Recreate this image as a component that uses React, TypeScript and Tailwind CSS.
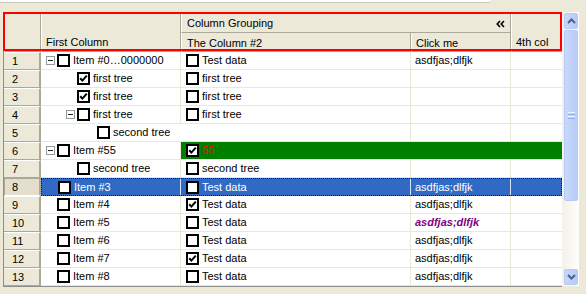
import React from 'react';

type Row = {
  n: number;
  level: number;
  expander?: boolean;
  c1: boolean;
  t1: string;
  kind?: 'span' | 'green' | 'selected';
  c2?: boolean;
  t2?: string;
  t3?: string;
  fancy3?: boolean;
};

const ROWS: Row[] = [
  { n: 1, level: 0, expander: true, c1: false, t1: 'Item #0…0000000', c2: false, t2: 'Test data', t3: 'asdfjas;dlfjk' },
  { n: 2, level: 1, c1: true, t1: 'first tree', c2: false, t2: 'first tree' },
  { n: 3, level: 1, c1: true, t1: 'first tree', c2: false, t2: 'first tree' },
  { n: 4, level: 1, expander: true, c1: false, t1: 'first tree', c2: false, t2: 'first tree' },
  { n: 5, level: 2, c1: false, t1: 'second tree', kind: 'span' },
  { n: 6, level: 0, expander: true, c1: false, t1: 'Item #55', kind: 'green', c2: true, t2: '55' },
  { n: 7, level: 1, c1: false, t1: 'second tree', c2: false, t2: 'second tree' },
  { n: 8, level: 0, c1: false, t1: 'Item #3', kind: 'selected', c2: false, t2: 'Test data', t3: 'asdfjas;dlfjk' },
  { n: 9, level: 0, c1: false, t1: 'Item #4', c2: true, t2: 'Test data', t3: 'asdfjas;dlfjk' },
  { n: 10, level: 0, c1: false, t1: 'Item #5', c2: false, t2: 'Test data', t3: 'asdfjas;dlfjk', fancy3: true },
  { n: 11, level: 0, c1: false, t1: 'Item #6', c2: false, t2: 'Test data', t3: 'asdfjas;dlfjk' },
  { n: 12, level: 0, c1: false, t1: 'Item #7', c2: true, t2: 'Test data', t3: 'asdfjas;dlfjk' },
  { n: 13, level: 0, c1: false, t1: 'Item #8', c2: false, t2: 'Test data', t3: 'asdfjas;dlfjk' },
];

// checkbox sits 16px into the cell, each tree level adds 20px
const INDENT = ['pl-[16px]', 'pl-[36px]', 'pl-[56px]'];

function Check({ checked }: { checked?: boolean }) {
  return (
    <span className="flex size-[13px] shrink-0 items-center justify-center border-2 border-black bg-white">
      {checked && (
        <svg width="9" height="9" viewBox="0 0 9 9">
          <path d="M1.2 4.2 L3.4 6.6 L7.8 1.6" fill="none" stroke="#000" strokeWidth="2" />
        </svg>
      )}
    </span>
  );
}

function Expander() {
  return (
    <span className="flex size-[9px] shrink-0 items-center justify-center border border-[#919b9c] bg-white">
      <span className="h-px w-[5px] bg-[#222]" />
    </span>
  );
}

function RowHeader({ n, pressed }: { n: number; pressed?: boolean }) {
  return (
    <div
      className={
        pressed
          ? 'flex h-[18px] w-[37px] shrink-0 items-center border border-r-2 border-t-[#aca899] border-l-[#aca899] border-b-white border-r-[#aca899] bg-[#e3dfcc] pl-[7px]'
          : 'flex h-[18px] w-[37px] shrink-0 items-center border-t border-b border-r-2 border-t-white border-b-[#aca899] border-r-[#aca899] bg-[#ece9d8] pl-[8px]'
      }
    >
      {n}
    </div>
  );
}

function FirstCell({ row, width, selected }: { row: Row; width: string; selected?: boolean }) {
  return (
    <div
      className={`flex h-full shrink-0 items-center border-r ${width} ${INDENT[row.level]} ${
        selected ? 'border-[#d8e2f5]' : 'border-[#ebe8d6]'
      }`}
    >
      <div className="-ml-[11px] flex w-[11px] shrink-0">{row.expander && <Expander />}</div>
      <Check checked={row.c1} />
      <span className="ml-[3px] truncate">{row.t1}</span>
    </div>
  );
}

function DataRow({ row }: { row: Row }) {
  const selected = row.kind === 'selected';
  const line = selected ? 'border-[#d8e2f5]' : 'border-[#ebe8d6]';
  return (
    <div className="flex h-[18px]">
      <RowHeader n={row.n} pressed={selected} />
      <div
        className={`flex h-[18px] w-[521px] shrink-0 ${
          selected
            ? 'border border-dotted border-[#1b1b1b] bg-[#316ac5] text-white'
            : 'border-b border-[#ebe8d6] bg-white text-black'
        }`}
      >
        {row.kind === 'span' ? (
          <>
            <FirstCell row={row} width="w-[370px]" />
            <div className={`h-full w-[100px] shrink-0 border-r ${line}`} />
            <div className="h-full flex-1" />
          </>
        ) : row.kind === 'green' ? (
          <>
            <FirstCell row={row} width="w-[140px]" />
            <div className="flex h-full flex-1 items-center bg-[#008000] pl-[5px]">
              <Check checked={row.c2} />
              <span className="ml-[3px] text-[#ff0000]">{row.t2}</span>
            </div>
          </>
        ) : (
          <>
            <FirstCell row={row} width={selected ? 'w-[139px]' : 'w-[140px]'} selected={selected} />
            <div className={`flex h-full w-[230px] shrink-0 items-center border-r pl-[5px] ${line}`}>
              <Check checked={row.c2} />
              <span className="ml-[3px]">{row.t2}</span>
            </div>
            <div className={`flex h-full w-[100px] shrink-0 items-center border-r pl-[4px] ${line}`}>
              {row.t3 &&
                (row.fancy3 ? (
                  <span className="font-bold italic text-[#800080]">{row.t3}</span>
                ) : (
                  <span>{row.t3}</span>
                ))}
            </div>
            <div className="h-full flex-1" />
          </>
        )}
      </div>
    </div>
  );
}

function HeaderCell({ className, children }: { className: string; children?: React.ReactNode }) {
  return (
    <div className={`flex shrink-0 border-l border-r border-b border-l-white border-r-[#aca899] border-b-[#aca899] bg-[#ece9d8] ${className}`}>
      {children}
    </div>
  );
}

function Scrollbar() {
  return (
    <div className="flex h-[274px] w-[17px] shrink-0 flex-col border-l border-[#f4f3ee] bg-gradient-to-r from-[#f3f1e9] to-[#fefefb] px-px py-px">
      <div className="flex h-[16px] items-center justify-center rounded-[2px] border border-[#b6caf4] bg-gradient-to-r from-[#c8d8fc] to-[#b6cbf8]">
        <svg width="9" height="6" viewBox="0 0 9 6">
          <path d="M1 5 L4.5 1.5 L8 5" fill="none" stroke="#4d6185" strokeWidth="2" />
        </svg>
      </div>
      <div className="mt-px flex h-[171px] items-center justify-center rounded-[2px] border border-[#b6caf4] bg-gradient-to-r from-[#c9d9fc] to-[#b8ccf8]">
        <div className="flex flex-col gap-px">
          <span className="h-px w-[7px] bg-[#eef4fe]" />
          <span className="h-px w-[7px] bg-[#8cb0f8]" />
          <span className="h-px w-[7px] bg-[#eef4fe]" />
          <span className="h-px w-[7px] bg-[#8cb0f8]" />
        </div>
      </div>
      <div className="flex-1" />
      <div className="flex h-[16px] items-center justify-center rounded-[2px] border border-[#b6caf4] bg-gradient-to-r from-[#c8d8fc] to-[#b6cbf8]">
        <svg width="9" height="6" viewBox="0 0 9 6">
          <path d="M1 1 L4.5 4.5 L8 1" fill="none" stroke="#4d6185" strokeWidth="2" />
        </svg>
      </div>
    </div>
  );
}

export default function App() {
  return (
    <div className="relative h-[294px] w-[586px] overflow-hidden bg-[#ece9d8] font-['Liberation_Sans',sans-serif] text-[11px] leading-none text-black">
      <div className="h-[3px] w-[490px] border-b border-[#c9c7ba] bg-white" />
      <div className="mt-[9px] ml-[3px] flex">
        <div className="w-[559px] shrink-0 border-l border-b border-[#8e8e8e]">
          <div className="flex h-[40px] bg-[#ece9d8]">
            <HeaderCell className="w-[37px] border-l-[#ece9d8]" />
            <HeaderCell className="w-[140px] items-end pb-[3px] pl-[4px]">First Column</HeaderCell>
            <div className="flex w-[330px] shrink-0 flex-col">
              <HeaderCell className="h-[21px] items-center justify-between pt-[3px] pl-[5px] pr-[5px]">
                <span>Column Grouping</span>
                <svg width="9" height="8" viewBox="0 0 9 8">
                  <path d="M4 1 L1.2 4 L4 7 M8 1 L5.2 4 L8 7" fill="none" stroke="#000" strokeWidth="1.6" />
                </svg>
              </HeaderCell>
              <div className="flex h-[19px]">
                <HeaderCell className="w-[230px] items-center pt-[2px] pl-[5px]">The Column #2</HeaderCell>
                <HeaderCell className="w-[100px] items-center pt-[2px] pl-[4px]">Click me</HeaderCell>
              </div>
            </div>
            <HeaderCell className="w-[51px] items-end pb-[3px] pl-[4px]">4th col</HeaderCell>
          </div>
          {ROWS.map((r) => (
            <DataRow key={r.n} row={r} />
          ))}
        </div>
        <Scrollbar />
      </div>
      <div className="pointer-events-none absolute left-[3px] top-[12px] h-[39px] w-[559px] border-2 border-[#ff0000]" />
    </div>
  );
}
